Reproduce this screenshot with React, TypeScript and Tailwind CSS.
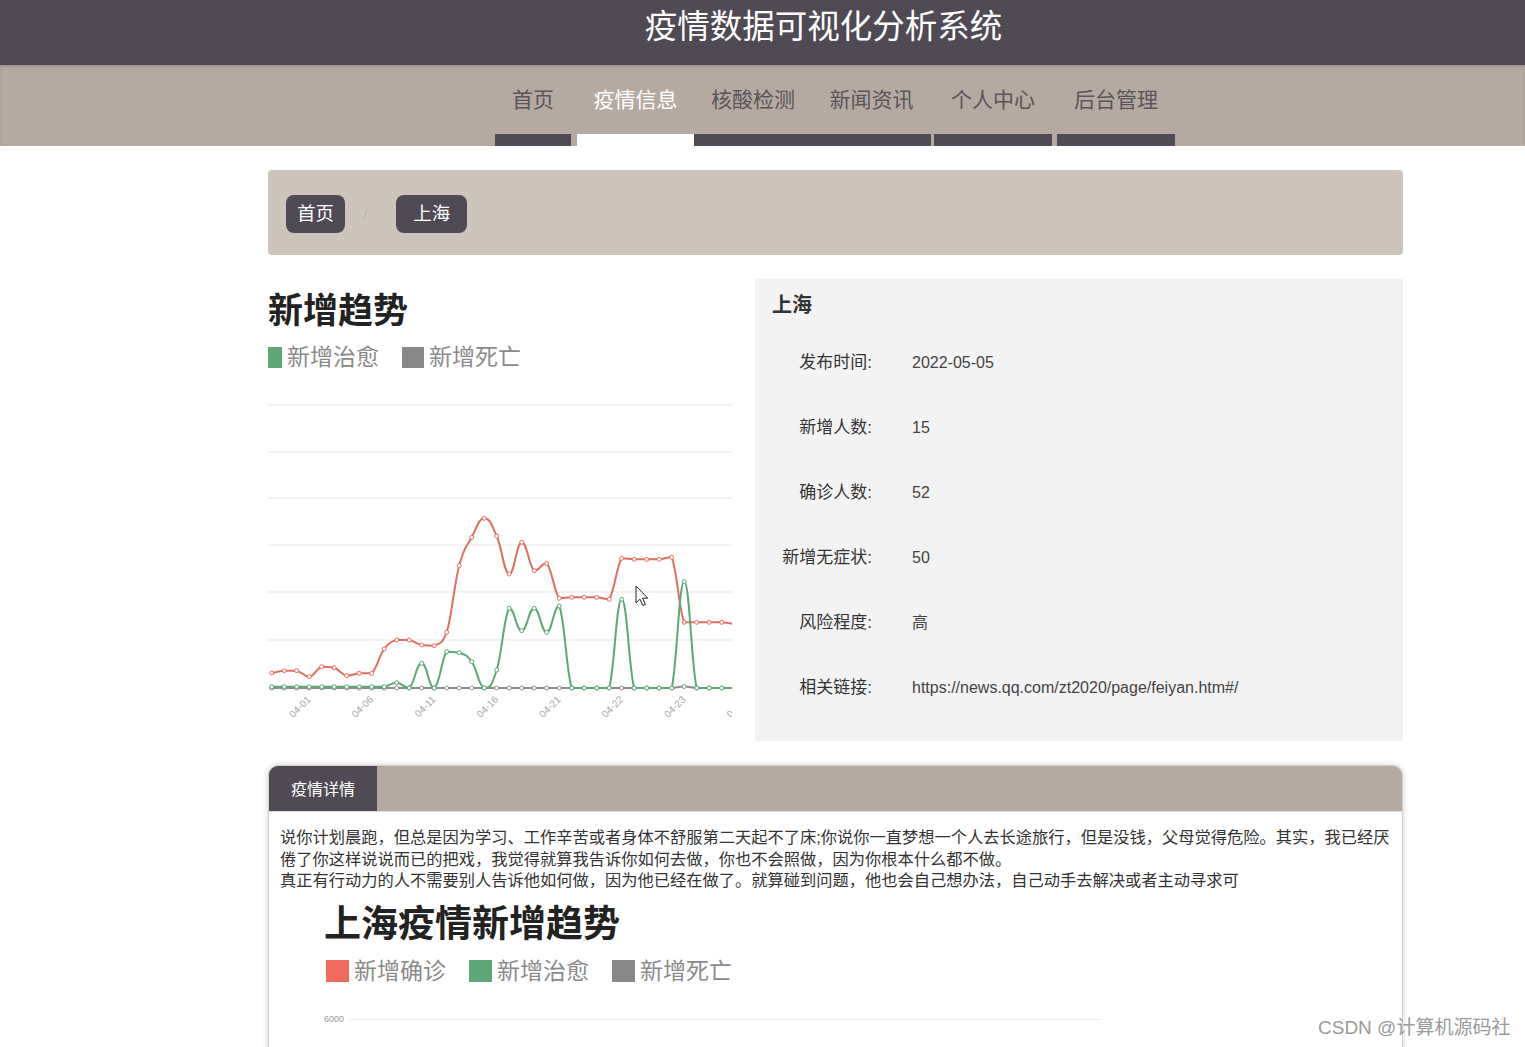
import React from 'react';

const navItems = [
    { label: '首页', w: 'w-[76px]', ml: 'ml-0', active: false },
    { label: '疫情信息', w: 'w-[117px]', ml: 'ml-[6px]', active: true },
    { label: '核酸检测', w: 'w-[118px]', ml: 'ml-0', active: false },
    { label: '新闻资讯', w: 'w-[119px]', ml: 'ml-0', active: false },
    { label: '个人中心', w: 'w-[118px]', ml: 'ml-[3px]', active: false },
    { label: '后台管理', w: 'w-[118px]', ml: 'ml-[5px]', active: false },
];

const infoRows = [
    { label: '发布时间:', value: '2022-05-05' },
    { label: '新增人数:', value: '15' },
    { label: '确诊人数:', value: '52' },
    { label: '新增无症状:', value: '50' },
    { label: '风险程度:', value: '高' },
    { label: '相关链接:', value: 'https://news.qq.com/zt2020/page/feiyan.htm#/' },
];

// y values read off the screenshot (page coords), one point every 12.5px
const redY = [673, 670.7, 670.7, 676.7, 666.7, 667.7, 675.7, 673.3, 673.3, 649, 640, 640, 645, 645.7, 632.3, 565.7, 537.3, 518.3, 536, 574, 542.3, 570.7, 563.3, 598.3, 597.3, 597.3, 597.3, 599.3, 558.3, 559.3, 559.3, 559.3, 557.3, 622.3, 622.3, 622.3, 622.3, 624];
const greenY = [686.7, 686.7, 686.7, 686.7, 686.7, 686.7, 686.7, 686.7, 686.7, 686.7, 682.7, 688, 663.3, 688, 651.7, 652.7, 661.7, 688, 670, 608.3, 630.7, 608.3, 632.3, 606, 688, 688, 688, 688, 599.3, 688, 688, 688, 688, 581.7, 688, 688, 688, 688];
const grayY = redY.map((_, i) => (i === 33 ? 686.5 : 688));

const toPts = (ys: number[]) => ys.map((y, i) => [3.7 + 12.5 * i, y - 400] as [number, number]);

function smoothPath(pts: [number, number][]) {
    let d = `M${pts[0][0]},${pts[0][1]}`;
    const t = 0.22;
    for (let i = 0; i < pts.length - 1; i++) {
        const p0 = pts[i - 1] || pts[i];
        const p1 = pts[i];
        const p2 = pts[i + 1];
        const p3 = pts[i + 2] || p2;
        const lo = Math.min(p1[1], p2[1]);
        const hi = Math.max(p1[1], p2[1]);
        const c1x = p1[0] + (p2[0] - p0[0]) * t;
        const c1y = Math.min(hi, Math.max(lo, p1[1] + (p2[1] - p0[1]) * t));
        const c2x = p2[0] - (p3[0] - p1[0]) * t;
        const c2y = Math.min(hi, Math.max(lo, p2[1] - (p3[1] - p1[1]) * t));
        d += ` C${c1x},${c1y} ${c2x},${c2y} ${p2[0]},${p2[1]}`;
    }
    return d;
}

const series = [
    { ys: grayY, color: '#8c8c8c' },
    { ys: redY, color: '#e26e63' },
    { ys: greenY, color: '#5ea878' },
];

const xLabels = ['04-01', '04-06', '04-11', '04-16', '04-21', '04-22', '04-23', '04-24'];

function TrendChart() {
    return (
        <svg width="464" height="340" viewBox="0 0 464 340" className="block overflow-hidden">
            {/* grid lines */}
            {[5, 52, 98, 145, 192, 240].map((y) => (
                <line key={y} x1="0" x2="464" y1={y} y2={y} stroke="#e6e6e6" strokeWidth="1" />
            ))}
            {series.map((s, si) => {
                const pts = toPts(s.ys);
                return (
                    <g key={si}>
                        <path d={smoothPath(pts)} fill="none" stroke={s.color} strokeWidth="2" />
                        {pts.map(([x, y], i) => (
                            <circle key={i} cx={x} cy={y} r="2" fill="#fff" stroke={s.color} strokeWidth="1" />
                        ))}
                    </g>
                );
            })}
            {/* x axis labels */}
            {xLabels.map((l, k) => {
                const x = 3.7 + 12.5 * (3 + 5 * k);
                return (
                    <text
                        key={l}
                        x={x}
                        y={301}
                        fontSize="10"
                        fill="#a8a8a8"
                        textAnchor="end"
                        fontFamily="Liberation Sans, sans-serif"
                        transform={`rotate(-45 ${x} 298)`}
                    >
                        {l}
                    </text>
                );
            })}
            {/* mouse pointer */}
            <g transform="translate(368 186)">
                <path d="M0,0 L0,17 L4,13.2 L6.8,19.5 L9.4,18.4 L6.6,12.2 L11.8,12.2 Z" fill="#fff" stroke="#222" strokeWidth="1" strokeLinejoin="round" />
            </g>
        </svg>
    );
}

export default function App() {
    return (
        <div className="relative w-full min-h-[1300px] bg-white font-['Liberation_Sans','Noto_Sans_CJK_SC',sans-serif] overflow-hidden">
            {/* Header */}
            <div className="h-[65px] bg-[#4f4a54] pt-[6px] pl-[122px] text-center">
                <h1 className="text-[32.5px] leading-[42px] text-white font-normal">疫情数据可视化分析系统</h1>
            </div>

            {/* Nav */}
            <div className="h-[81px] bg-[#b5aaa1] shadow-[inset_0_2px_3px_rgba(0,0,0,0.12)] flex pl-[495px]">
                {navItems.map((item) => (
                    <div key={item.label} className={`${item.w} ${item.ml} flex flex-col`}>
                        <div
                            className={`h-[69px] flex items-center justify-center text-[21px] ${
                                item.active ? 'text-white' : 'text-[#5b5458]'
                            }`}
                        >
                            {item.label}
                        </div>
                        <div className={`h-[12px] ${item.active ? 'bg-white' : 'bg-[#4f4a54]'}`} />
                    </div>
                ))}
            </div>

            <div className="w-[1135px] ml-[268px]">
                {/* Breadcrumb */}
                <div className="mt-[24px] h-[85px] bg-[#cdc5bb] rounded-[4px] flex items-center pl-[18px] pt-[3px]">
                    <span className="h-[38px] w-[59px] rounded-[8px] bg-[#4f4a54] text-white text-[18.5px] flex items-center justify-center">首页</span>
                    <span className="ml-[19px] mr-[29px] text-[#b3aba2] text-[12px]">/</span>
                    <span className="h-[38px] w-[71px] rounded-[8px] bg-[#4f4a54] text-white text-[18.5px] flex items-center justify-center">上海</span>
                </div>

                {/* Trend + info */}
                <div className="mt-[24px] flex">
                    <div className="w-[487px] overflow-hidden">
                        <h2 className="mt-[12px] text-[35px] leading-[40px] font-bold text-[#222]">新增趋势</h2>
                        <div className="mt-[15px] h-[22px] flex items-center text-[23px] leading-[22px] text-[#8a8a8a]">
                            <span className="w-[14px] h-[21px] bg-[#5ea878]" />
                            <span className="ml-[5px]">新增治愈</span>
                            <span className="ml-[23px] w-[22px] h-[21px] bg-[#888888]" />
                            <span className="ml-[5px]">新增死亡</span>
                        </div>
                        <div className="mt-[32px]">
                            <TrendChart />
                        </div>
                    </div>
                    <div className="w-[648px] h-[462px] bg-[#f3f3f3] pb-[21px]">
                        <div className="pt-[14px] pl-[17px] text-[20px] leading-[24px] font-bold text-[#333]">上海</div>
                        <div className="mt-[13px]">
                            {infoRows.map((r) => (
                                <div key={r.label} className="h-[65px] flex items-center text-[#333]">
                                    <span className="w-[117px] text-right text-[17px]">{r.label}</span>
                                    <span className="ml-[40px] text-[16px] text-[#444]">{r.value}</span>
                                </div>
                            ))}
                        </div>
                    </div>
                </div>

                {/* Detail card */}
                <div className="mt-[24px] rounded-t-[10px] overflow-hidden border-x border-t border-[#d6cfc8] shadow-[0_0_6px_rgba(0,0,0,0.18)] bg-white">
                    <div className="h-[46px] bg-[#b5aaa1] flex border-b border-[#e3ddd7]">
                        <div className="w-[108px] bg-[#4f4a54] text-white text-[16px] pt-[2px] flex items-center justify-center">疫情详情</div>
                    </div>
                    <div className="pl-[11px] pt-[15px]">
                        <p className="w-[1114px] text-[16.25px] leading-[21.5px] text-[#333]">
                            说你计划晨跑，但总是因为学习、工作辛苦或者身体不舒服第二天起不了床;你说你一直梦想一个人去长途旅行，但是没钱，父母觉得危险。其实，我已经厌倦了你这样说说而已的把戏，我觉得就算我告诉你如何去做，你也不会照做，因为你根本什么都不做。
                            <br />
                            真正有行动力的人不需要别人告诉他如何做，因为他已经在做了。就算碰到问题，他也会自己想办法，自己动手去解决或者主动寻求可
                        </p>
                    </div>
                    <div className="pl-[55px]">
                        <h2 className="mt-[11px] text-[37px] leading-[44px] font-bold text-[#222]">上海疫情新增趋势</h2>
                        <div className="mt-[13px] h-[22px] flex items-center text-[23px] leading-[22px] text-[#8a8a8a]">
                            <span className="ml-[2px] w-[23px] h-[22px] bg-[#f06a5b]" />
                            <span className="ml-[5px]">新增确诊</span>
                            <span className="ml-[23px] w-[23px] h-[22px] bg-[#5ea878]" />
                            <span className="ml-[5px]">新增治愈</span>
                            <span className="ml-[23px] w-[23px] h-[22px] bg-[#888888]" />
                            <span className="ml-[5px]">新增死亡</span>
                        </div>
                        <div className="mt-[32px] flex items-center h-[12px]">
                            <span className="w-[25px] text-[9px] text-[#999]">6000</span>
                            <span className="w-[752px] h-px bg-[#ececec]" />
                        </div>
                        <div className="h-[280px]" />
                    </div>
                </div>
            </div>

            {/* watermark */}
            <div className="absolute left-[1318px] top-[1016px] text-[19px] leading-[24px] text-[#9a9a9a]">CSDN @计算机源码社</div>
        </div>
    );
}
